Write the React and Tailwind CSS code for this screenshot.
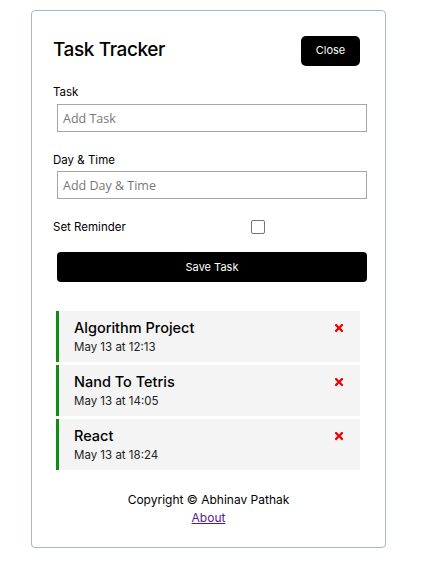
import { FaTimes } from 'react-icons/fa';

const tasks = [
  { id: 1, text: 'Algorithm Project', day: 'May 13 at 12:13' },
  { id: 2, text: 'Nand To Tetris', day: 'May 13 at 14:05' },
  { id: 3, text: 'React', day: 'May 13 at 18:24' },
];

const App = () => {
  return (
    <div className="bg-white min-h-[573px] pt-[10px] font-['Inter',sans-serif] text-black">
      <div className="ml-[31px] w-[355px] h-[538px] border border-[#a3b8cf] rounded-[4px] px-[21px] pt-[21px]">
        {/* Header */}
        <header className="flex justify-between items-center h-[37px] mb-[15px]">
          <h1 className="text-[19px] font-medium tracking-[-0.4px]">Task Tracker</h1>
          <button className="bg-black text-white text-[11px] w-[59px] h-[30px] rounded-[5px] mr-[4px]">
            Close
          </button>
        </header>

        {/* Form */}
        <form>
          <div className="mb-[20px]">
            <label className="block text-[11.5px] leading-[16px]">Task</label>
            <input
              type="text"
              placeholder="Add Task"
              className="block w-[310px] h-[28px] mt-[4px] ml-[4px] border border-[#a7a7a7] px-[5px] text-[12.5px] font-['Open_Sans',sans-serif] placeholder:text-[#777]"
            />
          </div>
          <div className="mb-[19px]">
            <label className="block text-[11.5px] leading-[16px]">Day &amp; Time</label>
            <input
              type="text"
              placeholder="Add Day & Time"
              className="block w-[310px] h-[28px] mt-[3px] ml-[4px] border border-[#a7a7a7] px-[5px] text-[12.5px] font-['Open_Sans',sans-serif] placeholder:text-[#777]"
            />
          </div>
          <div className="flex items-center h-[20px] mb-[14px]">
            <label className="text-[11.5px] w-[198px]">Set Reminder</label>
            <input
              type="checkbox"
              className="appearance-none w-[14px] h-[14px] mb-[3px] border-[1.5px] border-[#767676] rounded-[2px]"
            />
          </div>
          <button
            type="button"
            className="block w-[310px] h-[30px] ml-[4px] bg-black text-white text-[11px] rounded-[4px]"
          >
            Save Task
          </button>
        </form>

        {/* Tasks */}
        <div className="mt-[29px] flex flex-col gap-[3px] ml-[3px] w-[304px]">
          {tasks.map((task) => (
            <div
              key={task.id}
              className="h-[51px] bg-[#f4f4f4] border-l-[3px] border-[#138a13] pl-[15px] pr-[14px] pt-[8px]"
            >
              <h3 className="flex justify-between items-center text-[14.5px] font-medium leading-[18px]">
                {task.text}
                <FaTimes className="text-[#f00000] text-[12px] mr-[1px]" />
              </h3>
              <p className="text-[11.5px] leading-[16px] mt-[2px] text-[#222]">{task.day}</p>
            </div>
          ))}
        </div>

        {/* Footer */}
        <footer className="text-center mt-[21px] text-[12px] leading-[18px]">
          <p>Copyright &copy; Abhinav Pathak</p>
          <a href="#" className="text-[#551a8b] underline">
            About
          </a>
        </footer>
      </div>
    </div>
  );
};

export default App;
